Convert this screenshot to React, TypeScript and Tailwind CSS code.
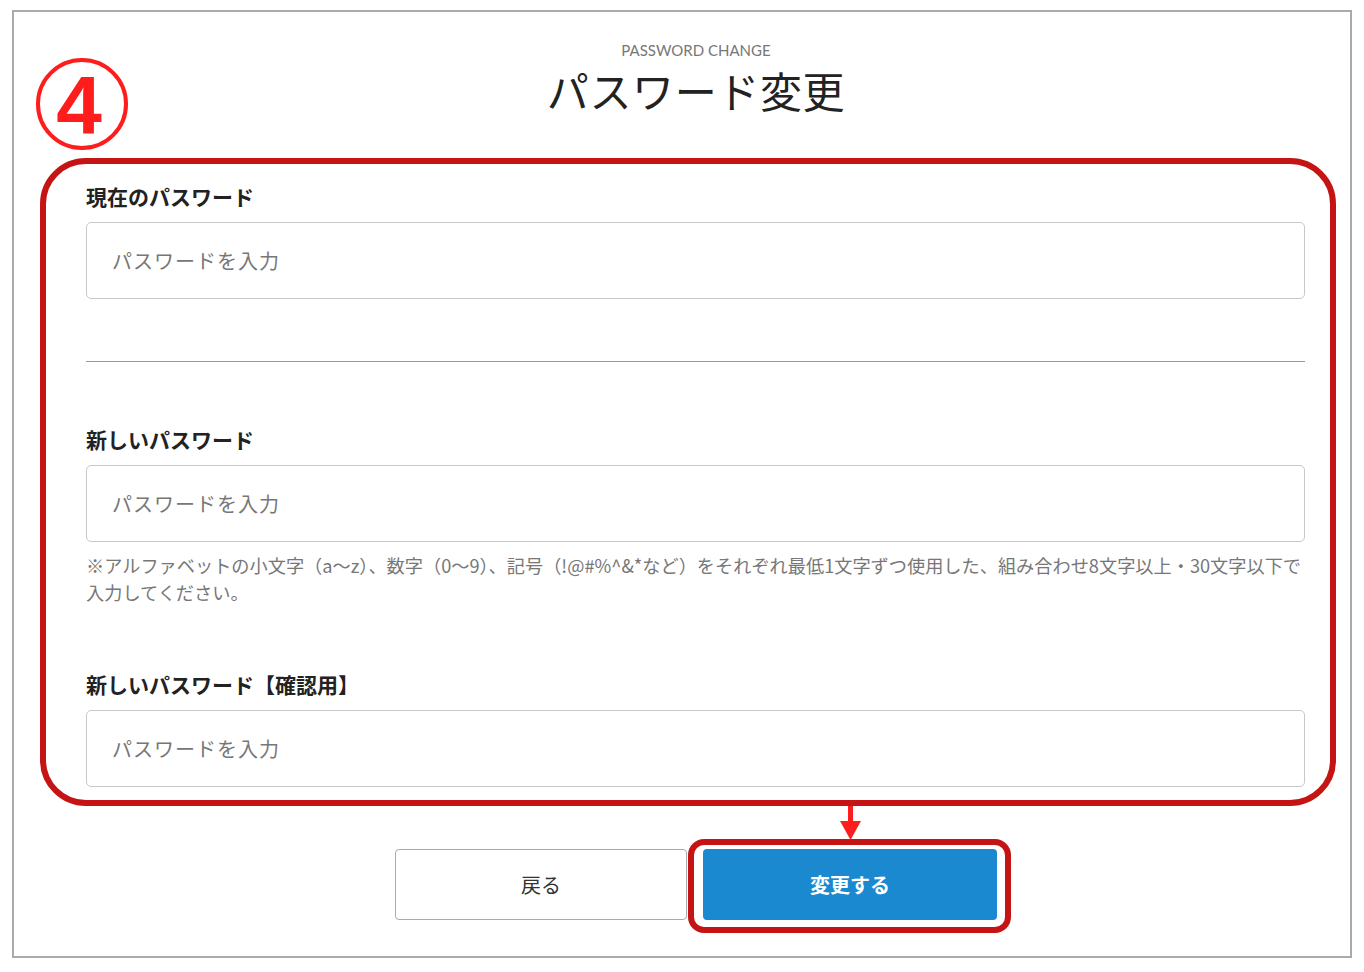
import React from "react";

const jp = { fontFamily: '"Noto Sans CJK JP", "Noto Sans", sans-serif' } as const;

function Field({ label }: { label: string }) {
  return (
    <div className="flex flex-col">
      <div className="text-[21px] leading-[28px] font-bold text-[#222]">{label}</div>
      <div className="mt-[12px] h-[77px] rounded-[5px] border border-[#c8c8c8] bg-white flex items-center pl-[25px]">
        <span className="text-[20px] tracking-[0.05em] text-[#777]">パスワードを入力</span>
      </div>
    </div>
  );
}

export default function App() {
  return (
    <div className="w-[1364px] h-[972px] bg-white overflow-hidden" style={jp}>
      <div className="relative ml-[12px] mt-[10px] w-[1340px] h-[948px] border-2 border-[#aaaaaa] bg-white">
        {/* header */}
        <div className="flex flex-col items-center pl-[28px] pt-[30px]">
          <div
            className="text-[15px] leading-[16px] text-[#777]"
            style={{ fontFamily: 'Lato, "Noto Sans", sans-serif' }}
          >
            PASSWORD CHANGE
          </div>
          <div className="mt-[4px] text-[42px] leading-[56px] text-[#222] tracking-[0.015em]">パスワード変更</div>
        </div>

        {/* circled number annotation */}
        <div className="absolute left-[22px] top-[46px] w-[92px] h-[92px] rounded-full border-[4px] border-[#ff1c1c] flex items-center justify-center">
          <span
            className="text-[82px] leading-none font-bold text-[#ff1c1c] -ml-[6px] mt-[2px]"
            style={{ fontFamily: '"Liberation Sans", Arial, sans-serif' }}
          >
            4
          </span>
        </div>

        {/* red annotated form box */}
        <div className="ml-[26px] mt-[40px] w-[1296px] rounded-[46px] border-[6px] border-[#c41414] pl-[40px] pr-[25px] pt-[18px] pb-[13px]">
          <Field label="現在のパスワード" />
          <div className="mt-[62px] h-px bg-[#999]" />
          <div className="mt-[63px]">
            <Field label="新しいパスワード" />
          </div>
          <div className="mt-[10px] text-[18.2px] leading-[27px] text-[#777] whitespace-nowrap">
            ※アルファベットの小文字（a〜z）、数字（0〜9）、記号（!@#%^&amp;*など）をそれぞれ最低1文字ずつ使用した、組み合わせ8文字以上・30文字以下で
            <br />
            入力してください。
          </div>
          <div className="mt-[64px]">
            <Field label="新しいパスワード【確認用】" />
          </div>
        </div>

        {/* buttons */}
        <div className="mt-[43px] pl-[381px] flex gap-[16px]">
          <button className="w-[292px] h-[71px] rounded-[4px] border border-[#aaaaaa] bg-white text-[20px] text-[#333] flex items-center justify-center">
            戻る
          </button>
          <div className="relative">
            <button className="w-[294px] h-[71px] rounded-[4px] bg-[#1a89d0] text-[20px] font-bold text-white flex items-center justify-center">
              変更する
            </button>
            <div className="absolute -left-[15px] -top-[10px] -right-[14px] -bottom-[13px] rounded-[16px] border-[6px] border-[#c41414] pointer-events-none" />
            <div className="absolute left-[137px] -top-[43px] w-[21px] h-[34px] flex flex-col items-center">
              <div className="w-[5px] h-[15px] bg-[#ff1c1c]" />
              <svg width="21" height="19" viewBox="0 0 21 19">
                <polygon points="0,0 21,0 10.5,19" fill="#ff1c1c" />
              </svg>
            </div>
          </div>
        </div>
      </div>
    </div>
  );
}
